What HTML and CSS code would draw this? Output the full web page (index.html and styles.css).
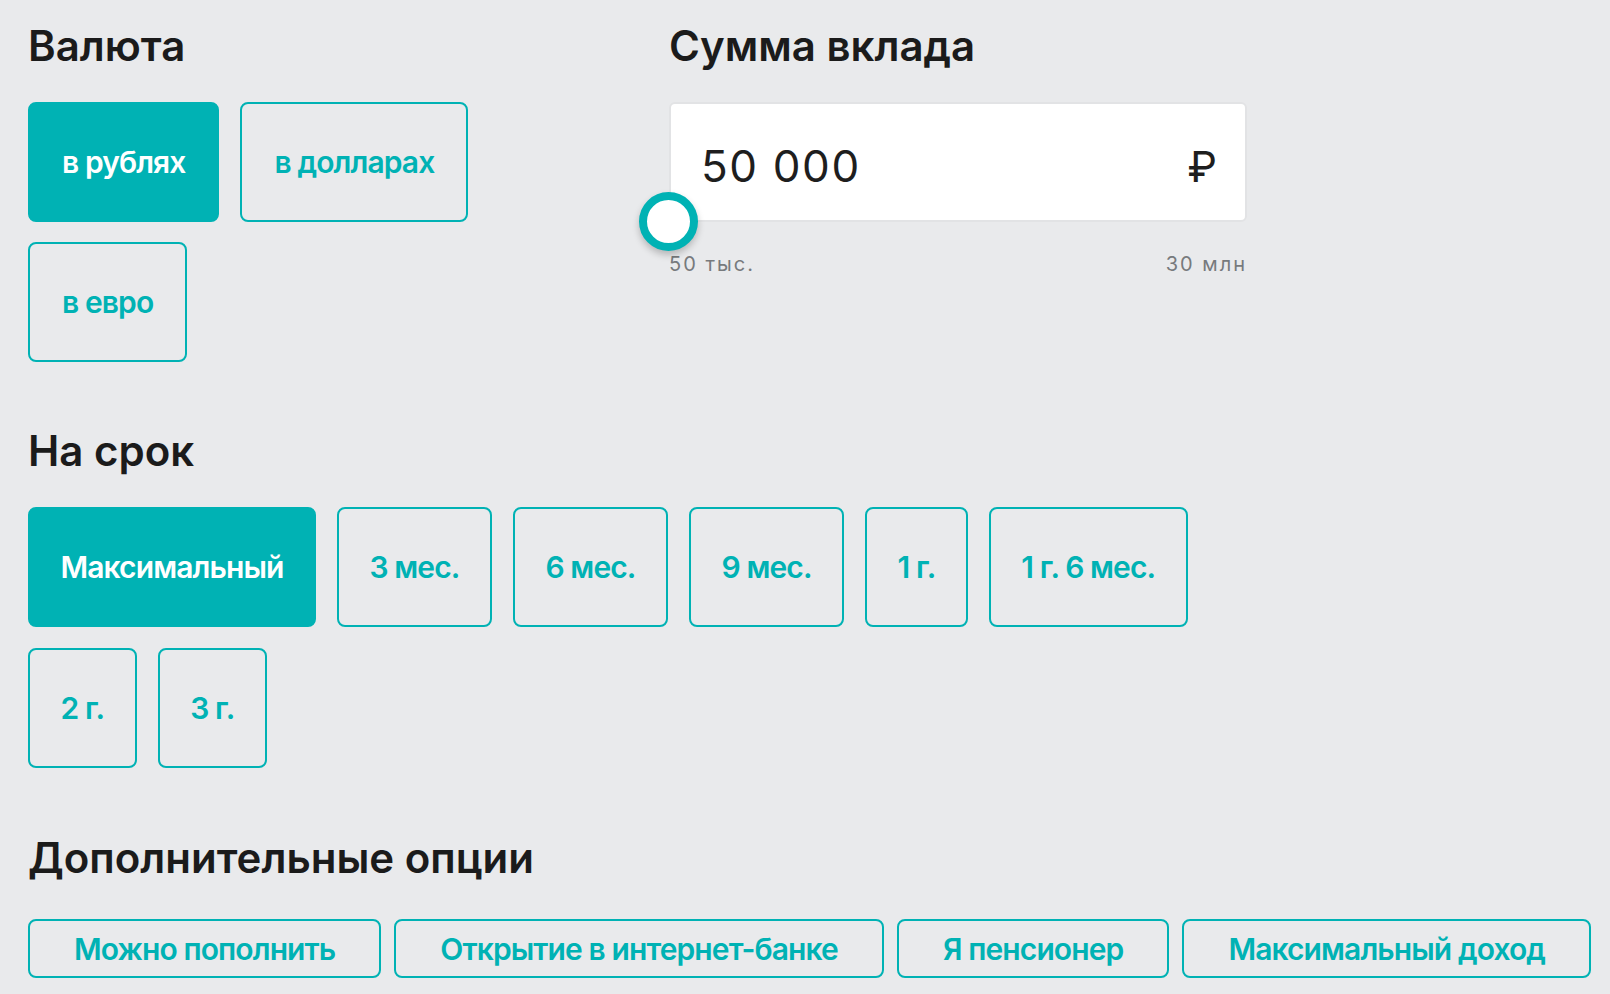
FILE: index.html
```html
<!DOCTYPE html>
<html lang="ru">
<head>
<meta charset="utf-8">
<title>Калькулятор вклада</title>
<link rel="stylesheet" href="styles.css">
</head>
<body>
<main class="calc">
  <div class="top">
    <section class="col-currency">
      <h2 class="title">Валюта</h2>
      <div class="chips">
        <button class="chip chip--active">в рублях</button>
        <button class="chip">в долларах</button>
        <button class="chip">в евро</button>
      </div>
    </section>
    <section class="col-amount">
      <h2 class="title">Сумма вклада</h2>
      <div class="amount-field">
        <span class="amount-value">50 000</span>
        <span class="amount-cur">₽</span>
        <span class="thumb"></span>
      </div>
      <div class="amount-range">
        <span>50 тыс.</span>
        <span>30 млн</span>
      </div>
    </section>
  </div>

  <section class="term">
    <h2 class="title">На срок</h2>
    <div class="chips chips--term">
      <button class="chip chip--active">Максимальный</button>
      <button class="chip">3 мес.</button>
      <button class="chip">6 мес.</button>
      <button class="chip">9 мес.</button>
      <button class="chip">1 г.</button>
      <button class="chip">1 г. 6 мес.</button>
      <button class="chip">2 г.</button>
      <button class="chip">3 г.</button>
    </div>
  </section>

  <section class="options">
    <h2 class="title">Дополнительные опции</h2>
    <div class="opts">
      <button class="opt">Можно пополнить</button>
      <button class="opt">Открытие в интернет-банке</button>
      <button class="opt">Я пенсионер</button>
      <button class="opt">Максимальный доход</button>
    </div>
  </section>
</main>
</body>
</html>
```

FILE: styles.css
```css
* { box-sizing: border-box; }

body {
  margin: 0;
  background: #e9eaec;
  font-family: Inter, "Noto Sans", sans-serif;
  color: #1b1b1b;
}

.calc {
  padding: 22px 0 0 28px;
}

.top {
  display: flex;
}

.col-currency {
  width: 600px;
  margin-right: 41px;
}

.col-amount {
  width: 578px;
}

.title {
  margin: 0;
  font-size: 42px;
  line-height: 48px;
  font-weight: 600;
  color: #1b1b1b;
}

.chips {
  display: flex;
  flex-wrap: wrap;
  gap: 20px 21px;
  margin-top: 32px;
}

.chips--term {
  max-width: 1220px;
  row-gap: 21px;
}

.chip {
  height: 120px;
  padding: 0 32px;
  border: 2px solid #00b2b4;
  border-radius: 8px;
  background: transparent;
  color: #00b2b4;
  font-family: Inter, "Noto Sans", sans-serif;
  font-size: 30px;
  font-weight: 600;
  letter-spacing: -0.9px;
  line-height: 1;
  white-space: nowrap;
  cursor: pointer;
}

.chips--term .chip {
  padding: 0 30.5px;
}

.chip--active {
  background: #00b2b4;
  color: #fff;
}

.amount-field {
  position: relative;
  margin-top: 32px;
  height: 120px;
  display: flex;
  align-items: center;
  justify-content: space-between;
  padding: 8px 28px 0 30px;
  background: #fff;
  border: 2px solid #e2e3e5;
  border-radius: 6px;
  font-size: 44px;
  font-weight: 400;
  color: #1e1e1e;
}

.amount-value {
  letter-spacing: 1.6px;
}

.amount-cur {
  font-size: 42px;
}

.thumb {
  position: absolute;
  left: -32px;
  bottom: -31px;
  width: 59px;
  height: 59px;
  border-radius: 50%;
  background: #fff;
  border: 8px solid #00b2b4;
  box-shadow: 0 4px 7px rgba(0, 0, 0, 0.22);
}

.amount-range {
  display: flex;
  justify-content: space-between;
  margin-top: 30px;
  font-size: 20px;
  line-height: 24px;
  letter-spacing: 2px;
  color: #777a7d;
}

.term {
  margin-top: 65px;
}

.options {
  margin-top: 66px;
}

.opts {
  display: flex;
  gap: 13px;
  margin-top: 37px;
}

.opt {
  flex: none;
  height: 59px;
  padding: 0 44px;
  border: 2px solid #00b2b4;
  border-radius: 8px;
  background: transparent;
  color: #00b2b4;
  font-family: Inter, "Noto Sans", sans-serif;
  font-size: 30px;
  font-weight: 600;
  letter-spacing: -0.9px;
  line-height: 1;
  white-space: nowrap;
  cursor: pointer;
}
```
